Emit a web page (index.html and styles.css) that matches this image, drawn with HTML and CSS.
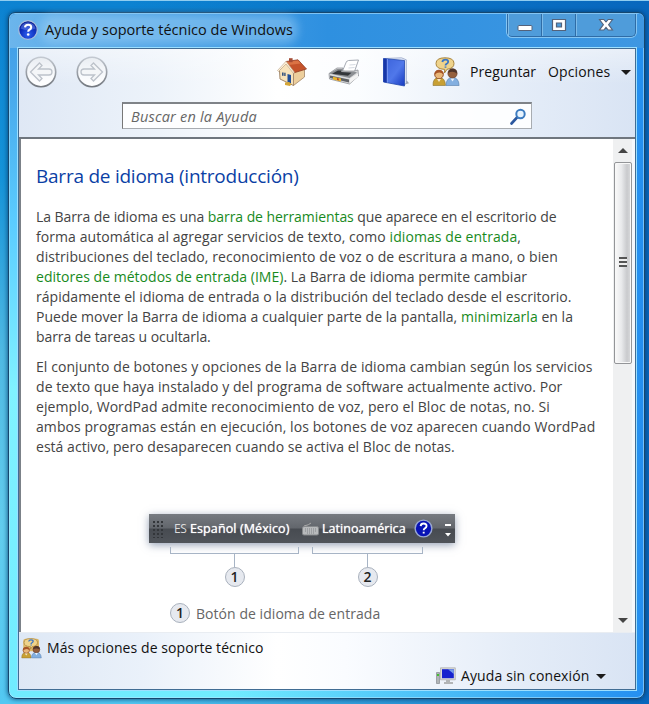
FILE: index.html
```html
<!DOCTYPE html>
<html lang="es">
<head>
<meta charset="utf-8">
<title>Ayuda y soporte técnico de Windows</title>
<link rel="stylesheet" href="styles.css">
</head>
<body>
<div class="window">
  <header class="titlebar">
    <svg class="help-icon" width="20" height="20" viewBox="0 0 20 20">
      <defs><radialGradient id="blueBall" cx="50%" cy="75%" r="70%"><stop offset="0" stop-color="#2f62f0"/><stop offset=".6" stop-color="#0b2dbd"/><stop offset="1" stop-color="#06188a"/></radialGradient></defs>
      <circle cx="10" cy="10" r="9.3" fill="url(#blueBall)" stroke="#a9bedc" stroke-width="1.2"/>
      <path d="M2.5 8.5a7.6 7.6 0 0 1 15 0q-7.500 3-15 0z" fill="#6d8cf0" opacity=".5"/>
      <path d="M7 7.400q.2-2.700 3.100-2.700 3.200 0 3.100 2.600 0 1.500-1.700 2.400-1.300.8-1.300 2" fill="none" stroke="#fff" stroke-width="2.100"/>
      <circle cx="10.200" cy="14.500" r="1.300" fill="#fff"/>
    </svg>
    <h1 class="title">Ayuda y soporte técnico de Windows</h1>
    <div class="controls">
      <span class="control"><svg width="16" height="16" viewBox="0 0 16 16"><rect x="1" y="8.500" width="14" height="5" rx="1" fill="#fff" stroke="#54627a"/></svg></span>
      <span class="control"><svg width="16" height="16" viewBox="0 0 16 16"><path fill-rule="evenodd" d="M1.500 2.500h13v11h-13zM5.500 6h5v4h-5z" fill="#fff" stroke="#54627a" stroke-width="1.200"/></svg></span>
      <span class="control close"><svg width="16" height="16" viewBox="0 0 16 16"><path d="M1.500 2.500h4.300L8 5 10.200 2.500h4.300l-3.900 5.200 3.900 5.300h-4.300L8 10.400 5.800 13H1.500l3.900-5.300z" fill="#fff" stroke="#54627a" stroke-width="1.100"/></svg></span>
    </div>
  </header>
  <div class="client">
    <div class="toolbar">
      <div class="tools">
        <svg class="nav back" width="34" height="34" viewBox="0 0 34 34">
          <defs><linearGradient id="disc" x1="0" y1="0" x2="0" y2="1"><stop offset="0" stop-color="#e9edf2"/><stop offset=".5" stop-color="#f6f8fb"/><stop offset="1" stop-color="#fff"/></linearGradient>
          <linearGradient id="ring" x1="0" y1="0" x2="0" y2="1"><stop offset="0" stop-color="#c3c9d1"/><stop offset="1" stop-color="#747980"/></linearGradient></defs>
          <circle cx="17" cy="17" r="14.700" fill="url(#disc)" stroke="url(#ring)" stroke-width="1.600"/>
          <path d="M6.500 17l9-9 2.500 2.500-3.500 3.500h10.500a3 3 0 0 1 0 6H14.500l3.500 3.500-2.500 2.500z" fill="#f4f6f8" stroke="#bcc2ca" stroke-width="1.300"/>
        </svg>
        <svg class="nav forward" width="34" height="34" viewBox="0 0 34 34">
          <circle cx="17" cy="17" r="14.700" fill="url(#disc)" stroke="url(#ring)" stroke-width="1.600"/>
          <path d="M27.500 17l-9-9-2.500 2.500 3.500 3.500H9a3 3 0 0 0 0 6h10.500l-3.500 3.500 2.500 2.500z" fill="#f4f6f8" stroke="#bcc2ca" stroke-width="1.300"/>
        </svg>
        <svg class="home" width="32" height="30" viewBox="0 0 32 30">
          <path d="M3.500 13.500L10 6l7.500 9v13.500L4 22z" fill="#f8e3bb" stroke="#a28769"/>
          <path d="M17.500 15l11-3.500V20l-11 8.500z" fill="#edcf9d" stroke="#a28769" stroke-width=".8"/>
          <path d="M10 4.500l12-1.700L30.500 12 18 15.800z" fill="#c5532b" stroke="#913c25" stroke-width=".8"/>
          <path d="M10.500 5l11.300-1.600 3 3.200-12 1.500z" fill="#e07c4c" opacity=".8"/>
          <path d="M1.500 13.500L10 4.300l8.500 11-1.200 1L10 7 2.500 14.500z" fill="#fff1d8" stroke="#bba58a" stroke-width=".6"/>
          <path d="M13 1.200h3.600v4H13z" fill="#a44c35"/>
          <path d="M11.500 17l3.500 1v8.500L11.500 25z" fill="#214e97"/><path d="M6 15.500h1.600v3.300H6zM8.200 15.800h1.400v3.300H8.200z" fill="#34527e"/>
          <path d="M9 25.500l4-.5 2.500 2-1.500 2-5-1z" fill="#d5a637"/>
        </svg>
        <svg class="printer" width="32" height="26" viewBox="0 0 32 26">
          <path d="M14.500 12l4-9.500 2-1L30.500 1l-4.500 13z" fill="#fff" stroke="#9ba0aa" stroke-width=".9"/>
          <path d="M20.500 9l6-.5M21.500 6l6-.5" stroke="#d5dae2"/>
          <path d="M1 14.500l8-5.500h6l-1 3h12l4-1 .5 6L21.500 25 1.500 20z" fill="#dadbdd" stroke="#85888e" stroke-width=".7"/>
          <path d="M1 14.500L9 10h5.500l-1 2.500H26l3 1-7.500 5.500z" fill="#8b8e92"/><path d="M4 14.700l6-3.200h3.500l-.5 1.500 10.500.8-3.500 3z" fill="#33363a"/>
          <path d="M2 16.500l19 4v3l-19-4.500z" fill="#606266"/><path d="M5 17.700l8 1.800v3l-8-2z" fill="#e8b42c"/><path d="M9 19l1.800.5v2L9 21z" fill="#b54a25"/>
          <path d="M22 19.500l8-5v3.500l-8 6z" fill="#f3f3f3"/>
        </svg>
        <svg class="book" width="28" height="30" viewBox="0 0 28 30">
          <defs><linearGradient id="cover" x1="0" y1="0" x2="1" y2="1"><stop offset="0" stop-color="#3a61da"/><stop offset=".55" stop-color="#5078ea"/><stop offset="1" stop-color="#173ac0"/></linearGradient></defs>
          <path d="M21 28l6-1.800-2-2.500-2.500.5z" fill="#7b828f" opacity=".7"/>
          <path d="M3 1.500l16.500-.7 4.800 2V26l-2 2z" fill="#e7edf9" stroke="#8b9ac0" stroke-width=".7"/>
          <path d="M1.500 1.500L22.500 3.500v25.500L1.500 25z" fill="url(#cover)" stroke="#254aaf" stroke-width=".8"/>
          <path d="M1.500 1.500L5 1.900v23.700L1.500 25z" fill="#1736a8"/><path d="M5.300 2v23.500" stroke="#7e9bf4"/>
        </svg>
        <svg class="people" width="28" height="30" viewBox="0 0 28 30">
          <defs><g id="people">
            <path d="M4 6.500Q4 .8 13 .8t9 5.700q0 5-7 5.800L12.500 16l.2-3.600Q4 12 4 6.500z" fill="#efd38b" stroke="#a9853e"/>
            <path d="M10.300 5q.4-2.300 3-2.300 2.900 0 2.900 2 0 1.200-1.500 2-1.200.7-1.200 1.700m0 1v1.400" fill="none" stroke="#3b76c5" stroke-width="1.800"/>
            <path d="M1 28.500q-.3-8 6-8t6.500 8z" fill="#c8a034" stroke="#89702b" stroke-width=".6"/><circle cx="7" cy="17.500" r="4.300" fill="#e9b678" stroke="#95532e"/>
            <path d="M2.600 18q-.3-5 4.400-5t4.500 4.500Q7 13.500 2.600 18z" fill="#a75427"/><path d="M5 22l2 3 2-3z" fill="#f5e6c6"/>
            <path d="M14 28.500q.2-8 6.500-8t6.600 8z" fill="#83afe0" stroke="#537caa" stroke-width=".6"/><circle cx="20.500" cy="16.500" r="4.600" fill="#95603d" stroke="#693c27" stroke-width=".7"/>
            <path d="M16 16q.5-4.500 5-4.500 4.400.5 4 5-4-3-9-.5z" fill="#50352a"/><path d="M18.500 21.500l2 3 2-3z" fill="#e8f2fd"/>
          </g></defs><use href="#people"/>
        </svg>
        <span class="ask">Preguntar</span>
        <span class="options">Opciones</span>
        <i class="caret"></i>
      </div>
      <div class="search"><span class="placeholder">Buscar en la Ayuda</span>
        <svg width="17" height="17" viewBox="0 0 17 17"><path d="M1.500 15.500l5.500-6" stroke="#2b579e" stroke-width="2.600" stroke-linecap="round"/><circle cx="10.500" cy="6" r="4.200" fill="#e7f4ff" stroke="#3d7cc0" stroke-width="2"/></svg>
      </div>
    </div>
    <div class="viewport">
      <main class="article">
        <h2 class="heading">Barra de idioma (introducción)</h2>
        <p class="para"><span class="tight">La Barra de idioma es una <a>barra de herramientas</a> que aparece en el escritorio de</span><br><span class="wide">forma automática al agregar servicios de texto, como <a>idiomas de entrada</a>,</span><br><span class="wide">distribuciones del teclado, reconocimiento de voz o de escritura a mano, o bien</span><br><a>editores de métodos de entrada (IME)</a>. La Barra de idioma permite cambiar<br>rápidamente el idioma de entrada o la distribución del teclado desde el escritorio.<br>Puede mover la Barra de idioma a cualquier parte de la pantalla, <a>minimizarla</a> en la<br><span class="tight">barra de tareas u ocultarla.</span></p>
        <p class="para"><span class="wide">El conjunto de botones y opciones de la Barra de idioma cambian según los servicios</span><br><span class="wide">de texto que haya instalado y del programa de software actualmente activo. Por</span><br><span class="wide">ejemplo, WordPad admite reconocimiento de voz, pero el Bloc de notas, no. Si</span><br><span class="wide">ambos programas están en ejecución, los botones de voz aparecen cuando WordPad</span><br>está activo, pero desaparecen cuando se activa el Bloc de notas.</p>
        <figure class="figure">
          <div class="langbar">
            <i class="grip"></i>
            <span class="code">ES</span><span class="lang">Español (México)</span>
            <svg class="keyboard" width="18" height="14" viewBox="0 0 18 14"><path d="M2 4q5-1 7-3" fill="none" stroke="#aaa"/><rect x=".5" y="4.500" width="16" height="8.500" rx="1.500" fill="#b8babc" stroke="#85888b"/><path d="M3 7h11M3 9h11M5 11h7" stroke="#808488" stroke-dasharray="1 1"/></svg>
            <span class="layout">Latinoamérica</span>
            <svg class="mini-help" width="19" height="19" viewBox="0 0 20 20"><circle cx="10" cy="10" r="8.800" fill="#0712b5" stroke="#98a6d1" stroke-width="1.500"/><path d="M7 7.500q.2-2.700 3.100-2.700 3.200 0 3.100 2.600 0 1.500-1.700 2.400-1.300.8-1.300 2m0 1.500v2" fill="none" stroke="#fff" stroke-width="2"/></svg>
            <svg class="more" width="8" height="20" viewBox="0 0 8 20"><path d="M1 5h6v2H1zM1 14h6l-3 3.500z" fill="#fff"/></svg>
          </div>
          <div class="callouts">
            <div class="callout first"><i class="bracket"></i><b class="num">1</b></div>
            <div class="callout second"><i class="bracket"></i><b class="num">2</b></div>
          </div>
          <figcaption class="legend"><b class="num">1</b><span>Botón de idioma de entrada</span></figcaption>
        </figure>
      </main>
      <div class="scrollbar"><i class="arrow up"></i><div class="thumb"><i class="thumb-grip"></i></div><i class="arrow down"></i></div>
    </div>
    <footer class="footer">
      <div class="support"><svg width="21" height="21" viewBox="0 0 28 30" preserveAspectRatio="none"><rect x="3" y="1" width="21" height="18" rx="3" fill="#ddb765"/><use href="#people"/></svg><span>Más opciones de soporte técnico</span></div>
      <div class="offline">
        <svg width="20" height="18" viewBox="0 0 20 18"><path d="M.5 5.500h3v11h-3z" fill="#b0b5b7" stroke="#858b90" stroke-width=".7"/><path d="M1 7h2v2H1z" fill="#42bc30"/><path d="M4.500.8h14.800v12H4.500z" fill="#d8d9d8" stroke="#aaa" stroke-width=".7"/><path d="M6 2.200h11.800v9H6z" fill="#1521ce"/><path d="M12 2.200h5.800V7z" fill="#769bea"/><path d="M10 13h4v2h3v2H8v-2h2z" fill="#b2b5b7"/></svg>
        <span>Ayuda sin conexión</span><i class="caret"></i>
      </div>
    </footer>
  </div>
</div>
</body>
</html>
```
FILE: styles.css
```css
* { box-sizing: border-box; }
body {
  margin: 0;
  width: 649px;
  height: 704px;
  padding: 11px 4px 5px 8px;
  overflow: hidden;
  font-family: "Open Sans", "Noto Sans", sans-serif;
  font-size: 14px;
  color: #111;
  border-top: 1px solid #8fcdf0;
  background:
    linear-gradient(90deg, transparent 20%, #0867bd 100%),
    linear-gradient(180deg, #0c82d1 0, #1593d8 25%, #4fb9e3 50%, #62cdee 75%, #52c8f2 100%);
}
.window {
  height: 687px;
  border: 1px solid #16476f;
  border-radius: 7px 7px 8px 8px;
  padding: 0 8px 8px 9px;
  display: flex;
  flex-direction: column;
  box-shadow: inset 0 0 0 1px #b2e6ff90, 0 0 5px #063b6b;
  background:
    linear-gradient(90deg, transparent 35%, #248ff0 100%),
    linear-gradient(180deg, #409be6 0, #47a6ea 10%, #5acbff 30%, #80f2ff 55%, #70ecff 100%);
}
.titlebar { height: 35px; flex: none; display: flex; align-items: flex-start; background: linear-gradient(90deg, #6bb5ec, #2e90e0 50%, #3e97e2); margin: 1px -8px 0; height: 34px; padding: 0 8px; border-radius: 6px 6px 0 0; }
.help-icon { margin: 6px 7px 0 0; }
.title { margin: 6px 0 0; font-size: 14.5px; line-height: 20px; font-weight: 400; letter-spacing: 0; white-space: nowrap; background: #a5d3f570; box-shadow: 0 0 9px 5px #a5d3f570; border-radius: 8px; height: 19px; }
.controls { display: flex; height: 23px; margin-left: auto; border: 1px solid #2f6ca6; border-top: 0; border-radius: 0 0 5px 5px; box-shadow: 0 0 0 1px #84c5f3; background: #4f9cda; }
.control { width: 34px; display: grid; place-items: center; border-right: 1px solid #2f6ca6; box-shadow: inset 1px 0 #7dbbe9; }
.control svg { margin-bottom: 1px; }
.close { width: 59px; border-right: 0; }
.client { flex: 1; min-height: 0; display: flex; flex-direction: column; border: 1px solid #416d94; box-shadow: 0 0 0 1px #9cdfff; background: #fff; }
.toolbar { height: 90px; background: linear-gradient(180deg, #fff6 0, #fff0 40%), linear-gradient(90deg, #dfe8f5 0, #edf3fa 23%, #fff 42%, #fbfdff 55%, #e5edf8 80%, #d9e4f4 100%); border-bottom: 2px solid #6f767e; }
.tools { display: flex; align-items: center; height: 46px; padding-left: 5px; line-height: 20px; }
.tools > * { flex: none; }
.nav.forward { margin-left: 17px; }
.home { margin-left: 167px; }
.printer { margin-left: 20px; }
.book { margin-left: 22px; }
.people { margin-left: 22px; }
.ask { width: 78px; margin-left: 10px; letter-spacing: .1px; }
.options { width: 73px; letter-spacing: .15px; }
.caret { border: 5px solid transparent; border-top-color: #1b1b1b; border-bottom: 0; }
.search { display: flex; align-items: center; justify-content: space-between; width: 410px; height: 27px; margin: 7px 0 0 103px; padding: 0 4px 0 8px; background: #ffffffe8; border: 1px solid #a8acb1; border-top: 2px solid #7f8388; border-left-color: #777; }
.placeholder { font-size: 14.5px; font-style: italic; color: #666; letter-spacing: .2px; }
.viewport { flex: 1; min-height: 0; display: flex; border-left: 2px solid #7b8188; border-right: 3px solid #f5f8fc; }
.article { flex: 1; min-width: 0; padding: 25px 0 0 15px; color: #444; white-space: nowrap; }
.heading { margin: 0 0 19px; font-size: 19px; line-height: 24px; font-weight: 400; letter-spacing: -.24px; color: #0b3fa5; }
.para { margin: 0 0 10px; font-size: 14px; line-height: 20px; letter-spacing: .03px; }
.para a { color: #188a1d; }
.para .tight { letter-spacing: -.07px; }
.para .wide { letter-spacing: .07px; }
.figure { margin: 57px 0 0 113px; }
.langbar { width: 306px; height: 29px; display: flex; align-items: center; color: #fff; background: linear-gradient(#777b81, #62666c 48%, #474b51 52%, #50545a); box-shadow: 0 2px 8px #586b8ba0; font-size: 13px; }
.langbar > * { flex: none; }
.grip { width: 11px; height: 18px; margin: 0 11px 0 3px; background: radial-gradient(circle, #33363a 1px, transparent 1.2px) 0 0 / 4px 4px; }
.code { width: 16px; font-size: 12px; letter-spacing: -.4px; color: #ddd; }
.lang { width: 112px; font-weight: 500; font-size: 12.5px; letter-spacing: .1px; text-shadow: 0 0 1px #fff; }
.layout { width: 92px; margin-left: 2px; font-weight: 500; font-size: 12.5px; letter-spacing: .05px; text-shadow: 0 0 1px #fff; }
.more { margin-left: 11px; }
.callouts { display: flex; height: 44px; padding: 4px 0 0 21px; gap: 13px; }
.callout { width: 129px; display: flex; flex-direction: column; align-items: center; }
.callout.second { width: 111px; }
.bracket { width: 100%; height: 7px; flex: none; border: 1px solid #a7b4c5; border-top: 0; }
.callout::after { content: ""; order: 1; flex: none; width: 1px; height: 13px; background: #a7b4c5; }
.callout .num { order: 2; }
.num { width: 20px; height: 20px; flex: none; display: grid; place-items: center; border: 1px solid #a9b1bd; border-radius: 50%; background: #e6e9ef; color: #222; font-size: 14px; font-weight: 600; line-height: 18px; }
.legend { display: flex; align-items: center; gap: 6px; margin: 14px 0 0 21px; height: 24px; color: #666; letter-spacing: .05px; }
.scrollbar { width: 19px; display: flex; flex-direction: column; align-items: center; background: #eff0f1; }
.arrow { border: 5px solid transparent; }
.up { border-bottom-color: #444; border-top: 0; margin: 9px 0 9px; }
.down { border-top-color: #444; border-bottom: 0; margin: auto 0 9px; }
.thumb { width: 18px; height: 202px; flex: none; border: 1px solid #939598; border-radius: 2px; display: grid; place-items: center; background: linear-gradient(90deg, #fafafa, #e9eaec 40%, #c9cacd 75%, #dadbdd); box-shadow: inset 0 0 0 1px #f8f8f8; }
.thumb-grip { width: 8px; height: 10px; margin-top: -2px; background: repeating-linear-gradient(#555 0 2px, #eee 2px 4px); }
.footer { height: 57px; flex: none; padding: 4px 0 0 2px; border-top: 1px solid #e9edf2; background: linear-gradient(90deg, #dee8f5 0, #eaf1fa 20%, #fff 42%, #fafcff 53%, #e5edf8 80%, #d9e4f4 100%); line-height: 20px; }
.support { display: flex; align-items: center; gap: 5px; height: 22px; letter-spacing: .07px; }
.offline { display: flex; align-items: center; width: 182px; margin: 7px 0 0 415px; height: 20px; letter-spacing: .12px; }
.offline svg { margin-right: 5px; }
.offline .caret { margin-left: 7px; }
```
